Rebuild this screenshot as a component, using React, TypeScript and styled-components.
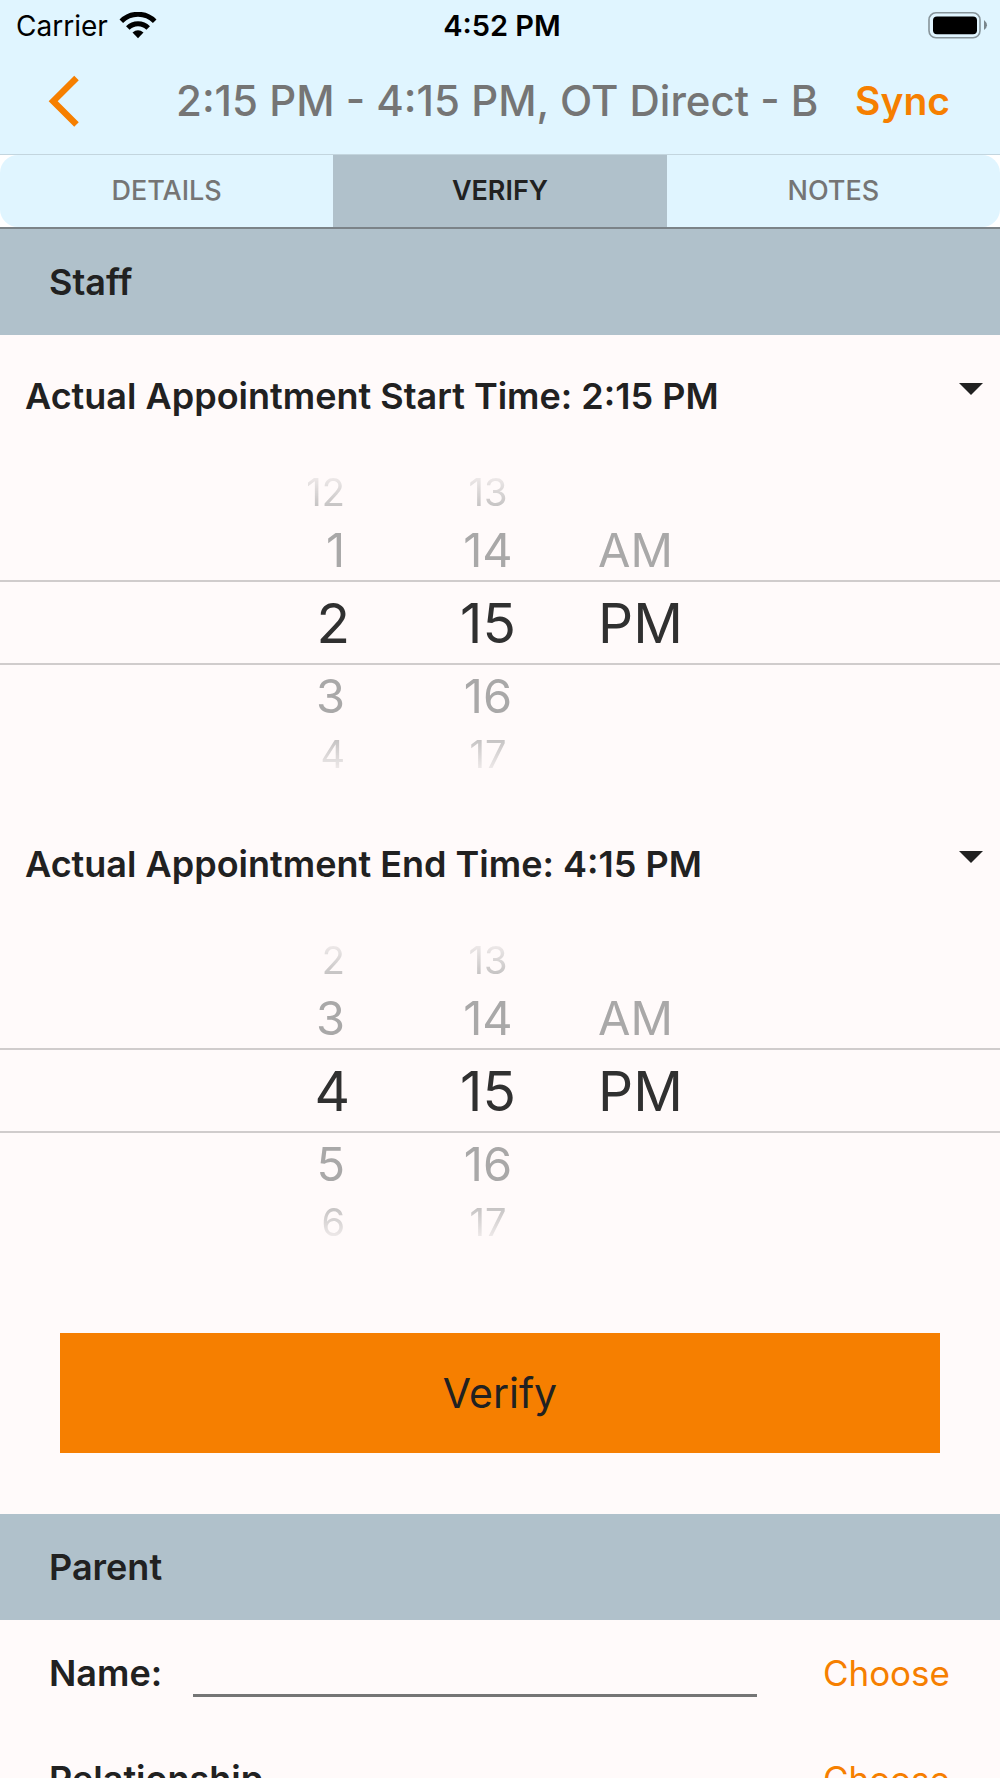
import React, { useState } from "react";
import styled, { createGlobalStyle, css } from "styled-components";

const colors = {
  sky: "#e0f5ff",
  steel: "#b0c1cb",
  page: "#fffafa",
  orange: "#f67f00",
  ink: "#212121",
  muted: "#757575",
};

const GlobalStyle = createGlobalStyle`
  *, *::before, *::after { box-sizing: border-box; }
  body { margin: 0; background: ${colors.page}; }
  body, button, input {
    font-family: Inter, "Liberation Sans", sans-serif;
    color: ${colors.ink};
  }
`;

const Screen = styled.div`
  display: flex;
  flex-direction: column;
  height: 100vh;
  overflow: hidden;
  background: ${colors.page};
`;

const Header = styled.header`
  flex: none;
  background: ${colors.sky};
  border-bottom: 1px solid #c3d5de;
`;

const StatusBar = styled.div`
  display: grid;
  grid-template-columns: 1fr auto 1fr;
  align-items: center;
  height: 50px;
  padding: 2px 12px 0 16px;
  font-size: 28px;
  line-height: 34px;
  color: #000;
`;

const Carrier = styled.span`
  display: flex;
  align-items: center;
  gap: 11px;
`;

const Clock = styled.time`
  font-weight: 600;
  font-size: 29px;
`;

const Battery = styled.svg`
  justify-self: end;
`;

const NavBar = styled.div`
  display: flex;
  align-items: center;
  height: 104px;
  padding: 0 50px 2px 46px;
`;

const PlainButton = styled.button`
  flex: none;
  padding: 0;
  border: 0;
  background: none;
  cursor: pointer;
`;

const BackButton = styled(PlainButton)`
  display: flex;
`;

const Title = styled.h1`
  flex: 1;
  min-width: 0;
  margin: 0 26px 0 94px;
  overflow: hidden;
  white-space: nowrap;
  font-size: 42px;
  line-height: 52px;
  font-weight: 500;
  color: ${colors.muted};
`;

const SyncButton = styled(PlainButton)`
  font-size: 39px;
  line-height: 52px;
  font-weight: 600;
  color: ${colors.orange};
`;

const Tabs = styled.nav`
  flex: none;
  display: flex;
  height: 74px;
  background: #fff;
  border-bottom: 2px solid #7b8388;
`;

const Tab = styled.button<{ $active: boolean }>`
  flex: 1;
  padding: 0;
  border: 0;
  font-size: 27px;
  line-height: 32px;
  font-weight: ${(p) => (p.$active ? 600 : 500)};
  color: ${(p) => (p.$active ? colors.ink : colors.muted)};
  background: ${(p) => (p.$active ? colors.steel : colors.sky)};
  cursor: pointer;

  &:first-child { border-radius: 18px 0 0 18px; }
  &:last-child { border-radius: 0 18px 18px 0; }
`;

const Content = styled.main`
  flex: 1;
  min-height: 0;
  overflow-y: auto;
  scrollbar-width: none;
`;

const SectionTitle = styled.h2`
  display: flex;
  align-items: center;
  height: 106px;
  margin: 0;
  padding: 0 49px;
  font-size: 36px;
  line-height: 44px;
  font-weight: 600;
  background: ${colors.steel};
`;

const TimeHeading = styled.button`
  display: flex;
  align-items: center;
  justify-content: space-between;
  width: 100%;
  height: 122px;
  padding: 0 17px 0 25px;
  border: 0;
  background: none;
  font-size: 36px;
  line-height: 44px;
  font-weight: 600;
  text-align: left;
  cursor: pointer;
`;

const Caret = styled.svg`
  margin-bottom: 14px;
`;

const Picker = styled.div`
  display: grid;
  grid-template-columns: 350fr 178fr 472fr;
  height: 316px;
  margin: 8px 0 22px;
  background: linear-gradient(#d0cccc, #d0cccc) 0 115px / 100% 2px no-repeat,
    linear-gradient(#d0cccc, #d0cccc) 0 198px / 100% 2px no-repeat;
`;

type Align = "end" | "center" | "start";

const Wheel = styled.div<{ $align: Align }>`
  display: grid;
  grid-template-rows: 54px 62px 84px 62px 54px;
  justify-items: ${(p) => p.$align};
  padding-left: ${(p) => (p.$align === "start" ? 70 : p.$align === "center" ? 98 : 0)}px;
  mask-image: linear-gradient(transparent, #000 54px, #000 262px, transparent);
`;

const levels = [
  css`
    font-size: 55px;
    color: #303030;
  `,
  css`
    font-size: 47px;
    color: #a9a8a8;
  `,
  css`
    font-size: 38px;
    color: #b4b2b2;
  `,
];

const WheelItem = styled.button<{ $level: number; $align: Align }>`
  padding: ${(p) => (p.$align === "end" && p.$level > 0 ? "0 5px 0 0" : "0")};
  border: 0;
  background: none;
  line-height: 54px;
  cursor: pointer;
  ${(p) => levels[p.$level]}
`;

const Actions = styled.div`
  padding: 62px 60px 61px;
`;

const VerifyButton = styled.button`
  width: 100%;
  height: 120px;
  border: 0;
  background: ${colors.orange};
  font-size: 41px;
  line-height: 52px;
  cursor: pointer;
`;

const FieldRow = styled.div`
  display: flex;
  align-items: center;
  height: 106px;
  padding: 0 50px 0 49px;
`;

const FieldLabel = styled.label`
  flex: none;
  min-width: 144px;
  font-size: 36px;
  line-height: 44px;
  font-weight: 600;
`;

const FieldInput = styled.input`
  flex: 1;
  min-width: 0;
  height: 48px;
  margin-right: 66px;
  padding: 0;
  border: 0;
  border-bottom: 3px solid ${colors.muted};
  background: none;
  font-size: 35px;
  outline: none;
`;

const ChooseButton = styled(PlainButton)`
  font-size: 35px;
  line-height: 44px;
  color: ${colors.orange};
`;

const hours = Array.from({ length: 12 }, (_, i) => String(i + 1));
const minutes = Array.from({ length: 60 }, (_, i) => String(i).padStart(2, "0"));
const periods = ["AM", "PM"];

interface WheelColumnProps {
  label: string;
  options: string[];
  value: string;
  align: Align;
  loop?: boolean;
  onChange: (value: string) => void;
}

function WheelColumn({ label, options, value, align, loop, onChange }: WheelColumnProps) {
  const index = options.indexOf(value);
  return (
    <Wheel role="group" aria-label={label} $align={align}>
      {[-2, -1, 0, 1, 2].map((offset) => {
        const n = options.length;
        const option = loop ? options[(index + offset + n) % n] : options[index + offset];
        return option === undefined ? (
          <span key={offset} />
        ) : (
          <WheelItem
            key={offset}
            type="button"
            $level={Math.abs(offset)}
            $align={align}
            aria-pressed={offset === 0}
            onClick={() => onChange(option)}
          >
            {option}
          </WheelItem>
        );
      })}
    </Wheel>
  );
}

function TimeField({ label, initialHour }: { label: string; initialHour: string }) {
  const [open, setOpen] = useState(true);
  const [hour, setHour] = useState(initialHour);
  const [minute, setMinute] = useState("15");
  const [period, setPeriod] = useState("PM");
  return (
    <section>
      <TimeHeading type="button" aria-expanded={open} onClick={() => setOpen(!open)}>
        {`${label}: ${hour}:${minute} ${period}`}
        <Caret width="24" height="12" viewBox="0 0 24 12" aria-hidden="true">
          <path d="M0 0H24L12 12Z" fill={colors.ink} />
        </Caret>
      </TimeHeading>
      {open && (
        <Picker>
          <WheelColumn label="Hour" options={hours} value={hour} align="end" loop onChange={setHour} />
          <WheelColumn label="Minute" options={minutes} value={minute} align="center" loop onChange={setMinute} />
          <WheelColumn label="AM or PM" options={periods} value={period} align="start" onChange={setPeriod} />
        </Picker>
      )}
    </section>
  );
}

function Field({ id, label }: { id: string; label: string }) {
  return (
    <FieldRow>
      <FieldLabel htmlFor={id}>{label}</FieldLabel>
      <FieldInput id={id} type="text" />
      <ChooseButton type="button">Choose</ChooseButton>
    </FieldRow>
  );
}

export default function App() {
  const [tab, setTab] = useState("VERIFY");
  return (
    <Screen>
      <GlobalStyle />
      <Header>
        <StatusBar>
          <Carrier>
            Carrier
            <svg width="38" height="28" viewBox="0 0 38 28" aria-hidden="true">
              <path
                d="M2.3 9.2A23.6 23.6 0 0 1 35.7 9.2"
                fill="none"
                stroke="#000"
                strokeWidth="5"
              />
              <path
                d="M8.8 15.9A14.4 14.4 0 0 1 29.2 15.9"
                fill="none"
                stroke="#000"
                strokeWidth="5"
              />
              <path d="M13.5 20.6Q19 16 24.5 20.6L19 26.2Z" fill="#000" />
            </svg>
          </Carrier>
          <Clock>4:52 PM</Clock>
          <Battery width="60" height="28" viewBox="0 0 60 28" aria-hidden="true">
            <rect x="1" y="0.8" width="51" height="25" rx="7" fill="none" stroke="#87949a" strokeWidth="1.6" />
            <rect x="5" y="4.4" width="44" height="17.8" rx="4" fill="#000" />
            <path d="M56 8Q62 13.3 56 18Z" fill="#7a868c" />
          </Battery>
        </StatusBar>
        <NavBar>
          <BackButton type="button" aria-label="Back">
            <svg width="36" height="56" viewBox="0 0 36 56" aria-hidden="true">
              <path d="M30.5 4.9L7.2 28.2L30.5 51.4" fill="none" stroke={colors.orange} strokeWidth="6.4" />
            </svg>
          </BackButton>
          <Title>2:15 PM - 4:15 PM, OT Direct - B</Title>
          <SyncButton type="button">Sync</SyncButton>
        </NavBar>
      </Header>
      <Tabs>
        {["DETAILS", "VERIFY", "NOTES"].map((name) => (
          <Tab key={name} type="button" $active={tab === name} onClick={() => setTab(name)}>
            {name}
          </Tab>
        ))}
      </Tabs>
      <Content>
        <SectionTitle>Staff</SectionTitle>
        <TimeField label="Actual Appointment Start Time" initialHour="2" />
        <TimeField label="Actual Appointment End Time" initialHour="4" />
        <Actions>
          <VerifyButton type="button">Verify</VerifyButton>
        </Actions>
        <SectionTitle>Parent</SectionTitle>
        <Field id="parent-name" label="Name:" />
        <Field id="parent-relationship" label="Relationship" />
      </Content>
    </Screen>
  );
}
